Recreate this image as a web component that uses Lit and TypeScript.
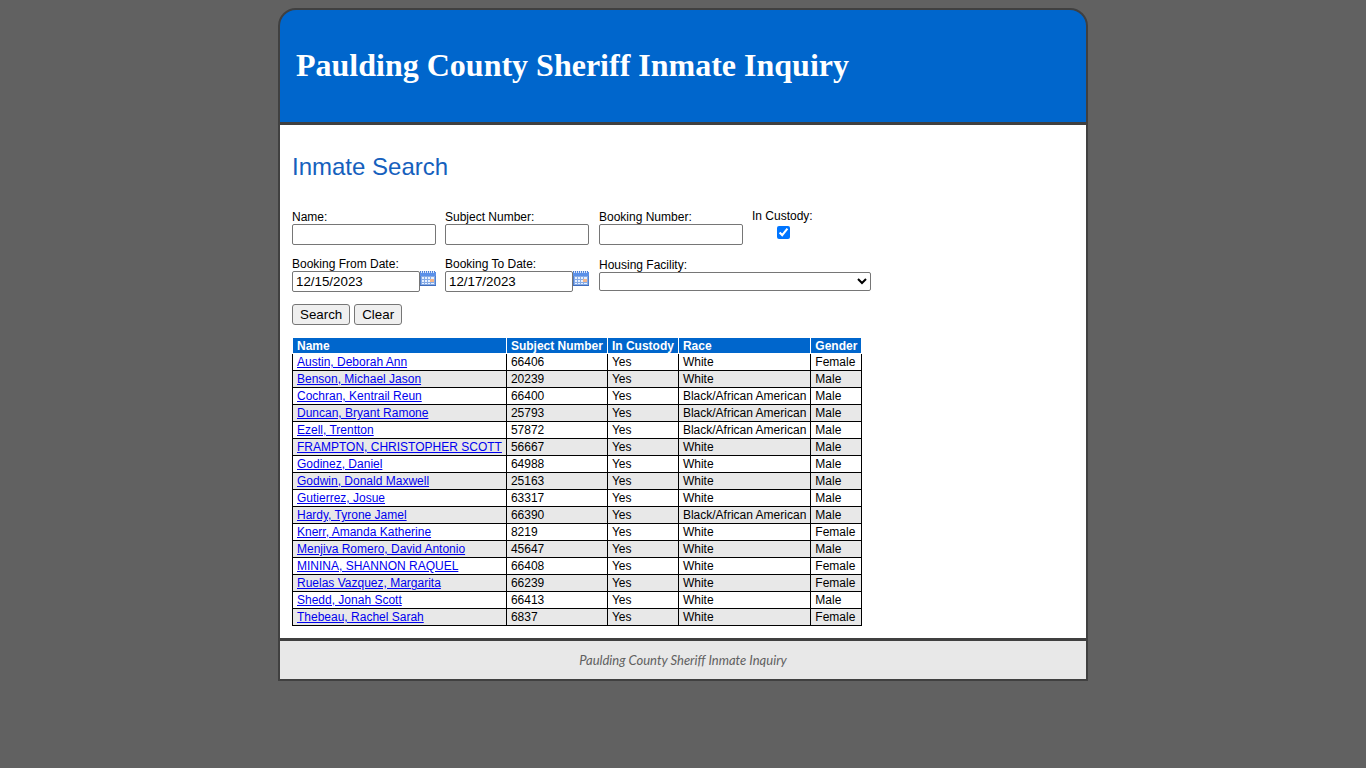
import { LitElement, html, css } from "lit";
import { customElement, state } from "lit/decorators.js";

interface Inmate {
  name: string;
  subject: string;
  race: string;
  gender: string;
}

const WHITE = "White";
const BLACK = "Black/African American";

const INMATES: Inmate[] = [
  { name: "Austin, Deborah Ann", subject: "66406", race: WHITE, gender: "Female" },
  { name: "Benson, Michael Jason", subject: "20239", race: WHITE, gender: "Male" },
  { name: "Cochran, Kentrail Reun", subject: "66400", race: BLACK, gender: "Male" },
  { name: "Duncan, Bryant Ramone", subject: "25793", race: BLACK, gender: "Male" },
  { name: "Ezell, Trentton", subject: "57872", race: BLACK, gender: "Male" },
  { name: "FRAMPTON, CHRISTOPHER SCOTT", subject: "56667", race: WHITE, gender: "Male" },
  { name: "Godinez, Daniel", subject: "64988", race: WHITE, gender: "Male" },
  { name: "Godwin, Donald Maxwell", subject: "25163", race: WHITE, gender: "Male" },
  { name: "Gutierrez, Josue", subject: "63317", race: WHITE, gender: "Male" },
  { name: "Hardy, Tyrone Jamel", subject: "66390", race: BLACK, gender: "Male" },
  { name: "Knerr, Amanda Katherine", subject: "8219", race: WHITE, gender: "Female" },
  { name: "Menjiva Romero, David Antonio", subject: "45647", race: WHITE, gender: "Male" },
  { name: "MININA, SHANNON RAQUEL", subject: "66408", race: WHITE, gender: "Female" },
  { name: "Ruelas Vazquez, Margarita", subject: "66239", race: WHITE, gender: "Female" },
  { name: "Shedd, Jonah Scott", subject: "66413", race: WHITE, gender: "Male" },
  { name: "Thebeau, Rachel Sarah", subject: "6837", race: WHITE, gender: "Female" },
];

@customElement("calendar-icon")
export class CalendarIcon extends LitElement {
  static styles = css`
    :host {
      display: block;
    }
    .icon {
      display: block;
    }
  `;

  render() {
    return html`
      <svg class="icon" width="16" height="15" viewBox="0 0 16 15" aria-hidden="true" shape-rendering="crispEdges">
        <rect x="0" y="1" width="16" height="14" fill="#5080d0" />
        <rect x="0" y="1" width="16" height="4" fill="#5b90e8" />
        <path d="M1 0h1v2h-1zM3 0h1v2h-1zM5 0h1v2h-1zM7 0h1v2h-1zM9 0h1v2h-1zM11 0h1v2h-1zM13 0h1v2h-1z" fill="#dbe7fa" />
        <path d="M0 0h1v1h-1zM2 0h1v1h-1zM4 0h1v1h-1zM6 0h1v1h-1zM8 0h1v1h-1zM10 0h1v1h-1zM12 0h1v1h-1zM14 0h1v1h-1z" fill="#4a7bd0" />
        <rect x="1" y="5" width="14" height="9" fill="#86abe6" />
        <path
          d="M2 6h2v2h-2zM5 6h2v2h-2zM8 6h2v2h-2zM11 6h3v2h-3zM2 9h2v2h-2zM5 9h2v2h-2zM8 9h2v2h-2zM2 12h2v1h-2zM5 12h2v1h-2zM8 12h2v1h-2zM11 12h3v1h-3z"
          fill="#e6f0ff"
        />
        <rect x="10" y="8" width="4" height="3" fill="#f2b48a" />
        <rect x="0" y="14" width="16" height="1" fill="#3f6cbc" />
      </svg>
    `;
  }
}

@customElement("app-root")
export class AppRoot extends LitElement {
  static styles = css`
    :host {
      display: block;
      box-sizing: border-box;
      min-height: 100vh;
      padding: 8px;
      background: #616161;
      color: #000;
      font: 12px/14px "Liberation Sans", Arial, sans-serif;
    }
    .page {
      box-sizing: border-box;
      max-width: 810px;
      margin: 0 auto;
      border: 2px solid #404040;
      border-radius: 18px 18px 0 0;
      background: #404040;
      overflow: hidden;
    }
    .banner {
      padding: 37px 16px 39px;
      background: #0066cc;
      border-bottom: 3px solid #404040;
    }
    .title {
      margin: 0;
      color: #fff;
      font: bold 32px/36px "Liberation Serif", "Times New Roman", serif;
    }
    .content {
      padding: 28px 12px 12px;
      background: #fff;
    }
    .heading {
      margin: 0 0 29px;
      color: #1560bd;
      font-size: 24px;
      line-height: 28px;
      font-weight: normal;
    }
    .fields {
      display: grid;
      grid-template-columns: 144px 145px 144px auto;
      justify-content: start;
      gap: 12px 9px;
    }
    .field {
      display: flex;
      flex-direction: column;
      align-items: flex-start;
    }
    .custody {
      align-items: center;
      justify-self: start;
      margin-top: -1px;
    }
    .housing {
      grid-column: 3 / span 2;
      margin-top: 1px;
    }
    .text {
      box-sizing: border-box;
      width: 144px;
      height: 21px;
      margin: 0;
      padding: 1px 2px;
      border: 1px solid #767676;
      border-radius: 2px;
      background: #fff;
      font-family: inherit;
    }
    .date {
      width: 128px;
      padding-left: 3px;
    }
    .date-row {
      display: flex;
      align-items: flex-start;
    }
    .picker {
      padding: 0;
      border: 0;
      background: none;
      cursor: pointer;
    }
    .check {
      width: 13px;
      height: 13px;
      margin: 3px 0 0 2px;
    }
    .select {
      width: 272px;
      height: 19px;
      margin: 0;
      border: 1px solid #767676;
      border-radius: 2px;
      background: #fff;
      font-family: inherit;
    }
    .actions {
      display: flex;
      gap: 4px;
      margin: 12px 0;
    }
    .button {
      height: 21px;
      margin: 0;
      padding: 1px 7px;
      border: 1px solid #767676;
      border-radius: 3px;
      background: #efefef;
      color: #000;
      font-family: inherit;
    }
    .results {
      border-collapse: collapse;
    }
    .head {
      padding: 1px 4px 0;
      border: 1px solid #fff;
      background: #0066cc;
      color: #fff;
      text-align: left;
      white-space: nowrap;
    }
    .cell {
      padding: 1px 4px;
      border: 1px solid #000;
      white-space: nowrap;
    }
    .row:nth-child(even) {
      background: #e8e8e8;
    }
    .link {
      color: #0000ee;
      text-decoration: underline;
    }
    .footer {
      padding: 12px;
      border-top: 3px solid #404040;
      background: #e8e8e8;
      color: #606060;
      font: italic 13px/14px Lato, "Trebuchet MS", sans-serif;
      text-align: center;
    }
  `;

  @state() private fromDate = "12/15/2023";
  @state() private toDate = "12/17/2023";

  private clear() {
    this.fromDate = "";
    this.toDate = "";
  }

  private dateField(id: string, label: string, value: string) {
    return html`
      <div class="field">
        <label for=${id}>${label}</label>
        <div class="date-row">
          <input class="text date" id=${id} type="text" .value=${value} />
          <button class="picker" type="button" aria-label="Choose date">
            <calendar-icon></calendar-icon>
          </button>
        </div>
      </div>
    `;
  }

  private textField(id: string, label: string) {
    return html`
      <div class="field">
        <label for=${id}>${label}</label>
        <input class="text" id=${id} type="text" />
      </div>
    `;
  }

  render() {
    return html`
      <div class="page">
        <header class="banner">
          <h1 class="title">Paulding County Sheriff Inmate Inquiry</h1>
        </header>
        <main class="content">
          <h2 class="heading">Inmate Search</h2>
          <form @submit=${(e: Event) => e.preventDefault()}>
            <div class="fields">
              ${this.textField("name", "Name:")}
              ${this.textField("subject", "Subject Number:")}
              ${this.textField("booking", "Booking Number:")}
              <div class="field custody">
                <label for="custody">In Custody:</label>
                <input class="check" id="custody" type="checkbox" checked />
              </div>
              ${this.dateField("from", "Booking From Date:", this.fromDate)}
              ${this.dateField("to", "Booking To Date:", this.toDate)}
              <div class="field housing">
                <label for="housing">Housing Facility:</label>
                <select class="select" id="housing">
                  <option></option>
                </select>
              </div>
            </div>
            <div class="actions">
              <button class="button" type="submit">Search</button>
              <button class="button" type="button" @click=${this.clear}>Clear</button>
            </div>
          </form>
          <table class="results">
            <thead>
              <tr>
                ${["Name", "Subject Number", "In Custody", "Race", "Gender"].map(
                  (h) => html`<th class="head" scope="col">${h}</th>`
                )}
              </tr>
            </thead>
            <tbody>
              ${INMATES.map(
                (p) => html`
                  <tr class="row">
                    <td class="cell"><a class="link" href="#${p.subject}">${p.name}</a></td>
                    <td class="cell">${p.subject}</td>
                    <td class="cell">Yes</td>
                    <td class="cell">${p.race}</td>
                    <td class="cell">${p.gender}</td>
                  </tr>
                `
              )}
            </tbody>
          </table>
        </main>
        <footer class="footer">Paulding County Sheriff Inmate Inquiry</footer>
      </div>
    `;
  }
}
